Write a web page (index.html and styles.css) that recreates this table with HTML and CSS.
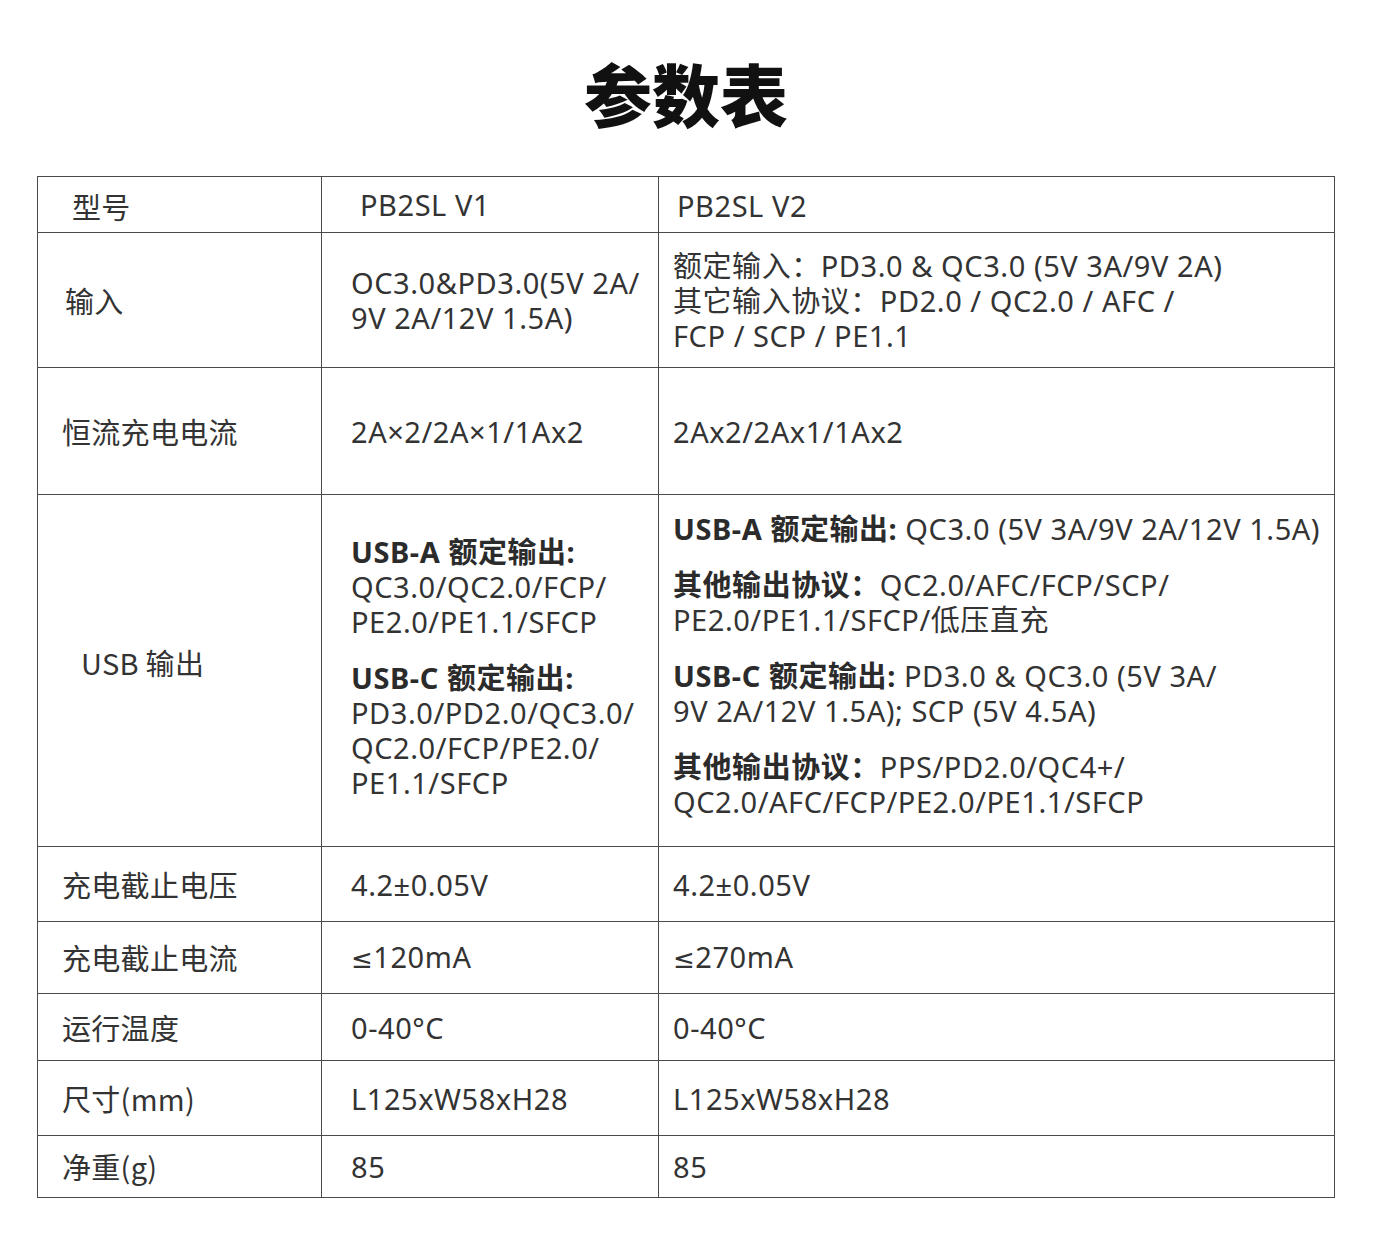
FILE: index.html
```html
<!DOCTYPE html>
<html lang="zh-CN">
<head>
<meta charset="utf-8">
<title>参数表</title>
<link rel="stylesheet" href="styles.css">
</head>
<body>
<div class="page">
  <h1 class="title">参数表</h1>
  <table class="spec">
    <colgroup>
      <col class="c1"><col class="c2"><col class="c3">
    </colgroup>
    <tr class="r-head">
      <td class="k k-head"><div class="lower3">型号</div></td>
      <td class="v2 v-head">PB2SL V1</td>
      <td class="v3 v3-head"><div class="lower2">PB2SL V2</div></td>
    </tr>
    <tr class="r-input">
      <td class="k k-input">输入</td>
      <td class="v2">OC3.0&amp;PD3.0(5V 2A/<br>9V 2A/12V 1.5A)</td>
      <td class="v3">额定输入：PD3.0 &amp; QC3.0 (5V 3A/9V 2A)<br>其它输入协议：PD2.0 / QC2.0 / AFC /<br>FCP / SCP / PE1.1</td>
    </tr>
    <tr class="r-cc">
      <td class="k">恒流充电电流</td>
      <td class="v2">2A×2/2A×1/1Ax2</td>
      <td class="v3">2Ax2/2Ax1/1Ax2</td>
    </tr>
    <tr class="r-usb">
      <td class="k k-usb"><div class="lift-usb">USB 输出</div></td>
      <td class="v2">
        <div class="lift-usb2">
          <p class="para"><b>USB-A 额定输出:</b><br>QC3.0/QC2.0/FCP/<br>PE2.0/PE1.1/SFCP</p>
          <p class="para"><b>USB-C 额定输出:</b><br>PD3.0/PD2.0/QC3.0/<br>QC2.0/FCP/PE2.0/<br>PE1.1/SFCP</p>
        </div>
      </td>
      <td class="v3">
        <div class="lift-usb3">
          <p class="para nowrap"><b>USB-A 额定输出:</b> QC3.0 (5V 3A/9V 2A/12V 1.5A)</p>
          <p class="para"><b>其他输出协议：</b>QC2.0/AFC/FCP/SCP/<br>PE2.0/PE1.1/SFCP/低压直充</p>
          <p class="para"><b>USB-C 额定输出:</b> PD3.0 &amp; QC3.0 (5V 3A/<br>9V 2A/12V 1.5A); SCP (5V 4.5A)</p>
          <p class="para"><b>其他输出协议：</b>PPS/PD2.0/QC4+/<br>QC2.0/AFC/FCP/PE2.0/PE1.1/SFCP</p>
        </div>
      </td>
    </tr>
    <tr class="r-cv">
      <td class="k">充电截止电压</td>
      <td class="v2">4.2±0.05V</td>
      <td class="v3">4.2±0.05V</td>
    </tr>
    <tr class="r-ci">
      <td class="k">充电截止电流</td>
      <td class="v2"><span class="sym">≤</span>120mA</td>
      <td class="v3"><span class="sym">≤</span>270mA</td>
    </tr>
    <tr class="r-temp">
      <td class="k">运行温度</td>
      <td class="v2">0-40°C</td>
      <td class="v3">0-40°C</td>
    </tr>
    <tr class="r-size">
      <td class="k">尺寸(mm)</td>
      <td class="v2">L125xW58xH28</td>
      <td class="v3">L125xW58xH28</td>
    </tr>
    <tr class="r-wt">
      <td class="k">净重(g)</td>
      <td class="v2">85</td>
      <td class="v3">85</td>
    </tr>
  </table>
</div>
</body>
</html>
```

FILE: styles.css
```css
html, body {
  margin: 0;
  padding: 0;
  background: #ffffff;
}

body {
  font-family: "Noto Sans", "Noto Sans CJK SC", sans-serif;
  color: #333333;
}

.page {
  width: 1375px;
  padding: 0 0 0 37px;
  box-sizing: border-box;
}

.title {
  margin: 0;
  padding-top: 45px;
  width: 1298px;
  height: 96px;
  line-height: 96px;
  text-align: center;
  font-family: "Noto Sans CJK SC", sans-serif;
  font-size: 68px;
  font-weight: 900;
  color: #111111;
  letter-spacing: 0;
  padding-right: 4px;
}

.spec {
  margin-top: 35px;
  width: 1297px;
  border-collapse: collapse;
  table-layout: fixed;
  font-size: 29px;
  line-height: 35px;
  letter-spacing: 0.55px;
}

.c1 { width: 284px; }
.c2 { width: 337px; }
.c3 { width: 676px; }

.spec td {
  border: 1.5px solid #4a4a4a;
  vertical-align: middle;
  padding: 0;
  font-family: "Noto Sans", "Noto Sans CJK SC", sans-serif;
  color: #333333;
}

.spec .k {
  padding-left: 24px;
  font-family: "Noto Sans CJK SC", sans-serif;
  letter-spacing: 0.3px;
}
.spec .k-head { padding-left: 34px; }
.spec .k-input { padding-left: 27px; }
.spec .k-usb { padding-left: 43px; }

.spec .v2 { padding-left: 29px; }
.spec .v-head { padding-left: 38px; }
.spec .v3 { padding-left: 14px; padding-right: 4px; }
.spec .v3-head { padding-left: 18px; }

.lower3 { padding-top: 3px; }
.lower2 { padding-top: 2px; }
.lift-usb { padding-bottom: 16px; }
.lift-usb2 { padding-bottom: 8px; }
.lift-usb3 { padding-bottom: 12px; }

.r-head td { height: 55px; }
.r-input td { height: 134px; }
.r-cc td { height: 126px; }
.r-usb td { height: 351px; }
.r-cv td { height: 74px; }
.r-ci td { height: 71px; }
.r-temp td { height: 66px; }
.r-size td { height: 74px; }
.r-wt td { height: 61px; }

.para {
  margin: 0;
}
.para + .para {
  margin-top: 21px;
}
.para b {
  font-weight: 700;
  color: #2b2b2b;
}
.nowrap {
  white-space: nowrap;
}
.sym {
  font-family: "DejaVu Sans", sans-serif;
  font-size: 26px;
}
```
